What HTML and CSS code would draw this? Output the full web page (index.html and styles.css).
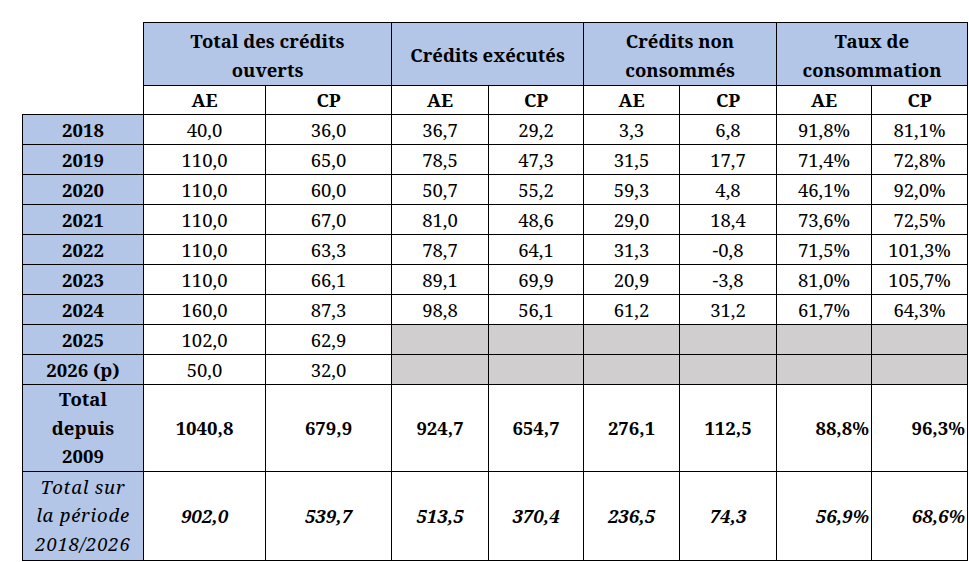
FILE: index.html
```html
<!DOCTYPE html>
<html lang="fr">
<head>
<meta charset="utf-8">
<link rel="stylesheet" href="styles.css">
</head>
<body>
<table class="credits">
  <colgroup>
    <col class="c-year">
    <col class="c-ae1"><col class="c-cp1">
    <col class="c-ae2"><col class="c-cp2">
    <col class="c-ae3"><col class="c-cp3">
    <col class="c-ae4"><col class="c-cp4">
  </colgroup>
  <thead>
    <tr class="r-group">
      <td class="corner" rowspan="2"></td>
      <th colspan="2">Total des crédits<br>ouverts</th>
      <th colspan="2">Crédits exécutés</th>
      <th colspan="2">Crédits non<br>consommés</th>
      <th colspan="2">Taux de<br>consommation</th>
    </tr>
    <tr class="r-sub">
      <th>AE</th><th>CP</th>
      <th>AE</th><th>CP</th>
      <th>AE</th><th>CP</th>
      <th>AE</th><th>CP</th>
    </tr>
  </thead>
  <tbody>
    <tr class="r-data"><th class="year">2018</th><td>40,0</td><td>36,0</td><td>36,7</td><td>29,2</td><td>3,3</td><td>6,8</td><td>91,8%</td><td>81,1%</td></tr>
    <tr class="r-data"><th class="year">2019</th><td>110,0</td><td>65,0</td><td>78,5</td><td>47,3</td><td>31,5</td><td>17,7</td><td>71,4%</td><td>72,8%</td></tr>
    <tr class="r-data"><th class="year">2020</th><td>110,0</td><td>60,0</td><td>50,7</td><td>55,2</td><td>59,3</td><td>4,8</td><td>46,1%</td><td>92,0%</td></tr>
    <tr class="r-data"><th class="year">2021</th><td>110,0</td><td>67,0</td><td>81,0</td><td>48,6</td><td>29,0</td><td>18,4</td><td>73,6%</td><td>72,5%</td></tr>
    <tr class="r-data"><th class="year">2022</th><td>110,0</td><td>63,3</td><td>78,7</td><td>64,1</td><td>31,3</td><td>-0,8</td><td>71,5%</td><td>101,3%</td></tr>
    <tr class="r-data"><th class="year">2023</th><td>110,0</td><td>66,1</td><td>89,1</td><td>69,9</td><td>20,9</td><td>-3,8</td><td>81,0%</td><td>105,7%</td></tr>
    <tr class="r-data"><th class="year">2024</th><td>160,0</td><td>87,3</td><td>98,8</td><td>56,1</td><td>61,2</td><td>31,2</td><td>61,7%</td><td>64,3%</td></tr>
    <tr class="r-data"><th class="year">2025</th><td>102,0</td><td>62,9</td><td class="na"></td><td class="na"></td><td class="na"></td><td class="na"></td><td class="na"></td><td class="na"></td></tr>
    <tr class="r-data"><th class="year">2026 (p)</th><td>50,0</td><td>32,0</td><td class="na"></td><td class="na"></td><td class="na"></td><td class="na"></td><td class="na"></td><td class="na"></td></tr>
    <tr class="r-total"><th class="year">Total<br>depuis<br>2009</th><td>1040,8</td><td>679,9</td><td>924,7</td><td>654,7</td><td>276,1</td><td>112,5</td><td class="rate">88,8%</td><td class="rate">96,3%</td></tr>
    <tr class="r-period"><th class="year">Total sur<br>la période<br>2018/2026</th><td>902,0</td><td>539,7</td><td>513,5</td><td>370,4</td><td>236,5</td><td>74,3</td><td class="rate">56,9%</td><td class="rate">68,6%</td></tr>
  </tbody>
</table>
</body>
</html>
```

FILE: styles.css
```css
html, body {
  margin: 0;
  padding: 0;
  background: #ffffff;
}

body {
  padding: 22px 0 0 22px;
  font-family: "Noto Serif", "Liberation Serif", serif;
  font-size: 18.5px;
  color: #000000;
}

.credits {
  border-collapse: collapse;
  table-layout: fixed;
  width: 946px;
}

.c-year { width: 121px; }
.c-ae1 { width: 122px; }
.c-cp1 { width: 126px; }
.c-ae2 { width: 97px; }
.c-cp2 { width: 95px; }
.c-ae3 { width: 96px; }
.c-cp3 { width: 97px; }
.c-ae4 { width: 95px; }
.c-cp4 { width: 96px; }

.credits th,
.credits td {
  border: 1px solid #000000;
  padding: 0;
  text-align: center;
  vertical-align: middle;
  line-height: 28px;
  font-weight: normal;
}

.credits .corner {
  border: none;
  background: transparent;
}

.credits th {
  font-weight: bold;
}

.r-group th {
  background: #b4c6e7;
  height: 59px;
  padding-top: 3px;
  line-height: 28.5px;
}

.r-sub th {
  background: #ffffff;
  height: 28px;
}

.r-data th,
.r-data td {
  height: 29px;
}

.credits .year {
  background: #b4c6e7;
}

.credits .na {
  background: #d0cece;
}

.r-total th,
.r-total td {
  height: 85px;
  font-weight: bold;
}

.r-total th.year {
  line-height: 28.5px;
}

.r-period th,
.r-period td {
  height: 88px;
  font-weight: bold;
  font-style: italic;
}

.r-period th.year {
  font-weight: normal;
  letter-spacing: 0.8px;
  line-height: 28.5px;
}

.credits .rate {
  text-align: right;
  padding-right: 2px;
}
```
